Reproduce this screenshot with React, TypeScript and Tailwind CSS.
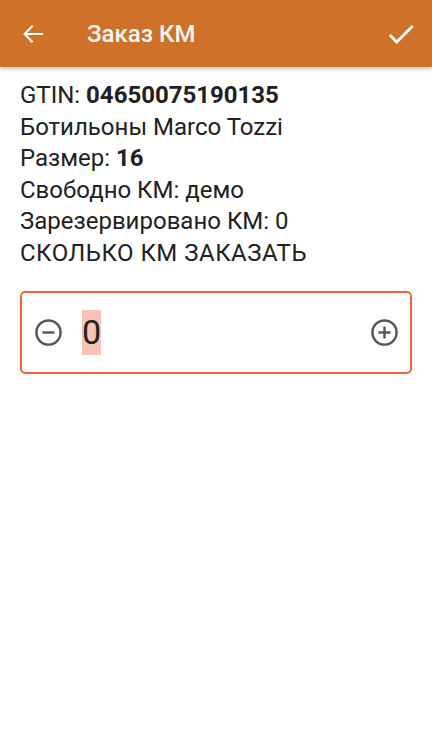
import React from 'react'

const rows = [
  { label: 'GTIN: ', value: '04650075190135' },
  { label: 'Ботильоны Marco Tozzi' },
  { label: 'Размер: ', value: '16' },
  { label: 'Свободно КМ: демо' },
  { label: 'Зарезервировано КМ: 0' },
  { label: 'СКОЛЬКО КМ ЗАКАЗАТЬ', caps: true },
]

const App = () => {
  return (
    <div className="w-[432px] h-[739px] bg-white font-['Roboto',sans-serif] overflow-hidden">
      <div className="h-[67px] bg-[#cf7128] flex items-center shadow-[0_2px_4px_rgba(0,0,0,0.25)] relative">
        <svg viewBox="0 0 20 18" className="w-5 h-[18px] ml-[23px] text-white" fill="none" stroke="currentColor" strokeWidth="2" strokeLinecap="square">
          <path d="M19 9H2M9 1.5L1.5 9 9 16.5" />
        </svg>
        <h1 className="ml-[44px] text-[24px] font-medium text-[#f5f5f5]">Заказ КМ</h1>
        <svg viewBox="0 0 24 24" className="w-[34px] h-[34px] ml-auto mr-[14px] text-white" fill="currentColor">
          <path d="M9 16.17L4.83 12l-1.42 1.41L9 19 21 7l-1.41-1.41z" />
        </svg>
      </div>
      <div className="px-5 pt-[13px]">
        {rows.map((row) => (
          <p
            key={row.label}
            className={
              row.caps
                ? 'text-[24px] leading-[31.6px] text-[#212121] tracking-[0.5px]'
                : 'text-[24px] leading-[31.6px] text-[#212121]'
            }
          >
            {row.label}
            {row.value && <span className="font-bold">{row.value}</span>}
          </p>
        ))}
        <div className="mt-[21px] h-[83px] border-2 border-[#f3633d] rounded-[5px] flex items-center pl-[12px] pr-[11px]">
          <svg viewBox="0 0 24 24" className="w-[29px] h-[29px] text-[#555]" fill="none" stroke="currentColor" strokeWidth="2">
            <circle cx="12" cy="12" r="10" />
            <path d="M7 12h10" />
          </svg>
          <span className="ml-[19px] bg-[#f9c2b5] text-[34px] leading-[45px] text-[#212121]">0</span>
          <svg viewBox="0 0 24 24" className="w-[29px] h-[29px] ml-auto text-[#555]" fill="none" stroke="currentColor" strokeWidth="2">
            <circle cx="12" cy="12" r="10" />
            <path d="M7 12h10M12 7v10" />
          </svg>
        </div>
      </div>
    </div>
  )
}

export default App
